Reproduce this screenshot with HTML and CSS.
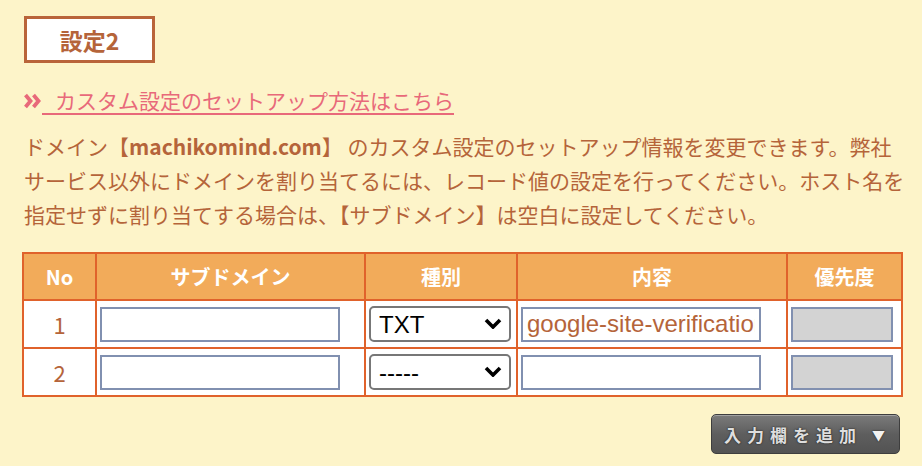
FILE: index.html
```html
<!DOCTYPE html>
<html lang="ja">
<head>
    <meta charset="UTF-8">
    <meta name="viewport" content="width=device-width, initial-scale=1.0">
    <title>設定2</title>
    <link rel="stylesheet" href="styles.css">
</head>
<body>

    <div class="container">
        <div class="setting-title">設定2</div>

        <!-- セットアップ方法へのリンク -->
        <div class="guide-link">
            <svg class="guide-arrow" width="18" height="16" viewBox="0 0 18 16">
                <path d="M1.5 2 L6.5 8 L1.5 14" fill="none" stroke="#e8697a" stroke-width="3.8"/>
                <path d="M9.5 2 L14.5 8 L9.5 14" fill="none" stroke="#e8697a" stroke-width="3.8"/>
            </svg>
            <a href="#">カスタム設定のセットアップ方法はこちら</a>
        </div>

        <p class="description">
            ドメイン【<b>machikomind.com</b>】 のカスタム設定のセットアップ情報を変更できます。弊社<br>
            サービス以外にドメインを割り当てるには、レコード値の設定を行ってください。ホスト名を<br>
            指定せずに割り当てする場合は、【サブドメイン】は空白に設定してください。
        </p>

        <!-- レコード入力欄 -->
        <table class="record-table">
            <thead>
                <tr>
                    <th class="col-no">No</th>
                    <th class="col-sub">サブドメイン</th>
                    <th class="col-type">種別</th>
                    <th class="col-value">内容</th>
                    <th class="col-priority">優先度</th>
                </tr>
            </thead>
            <tbody>
                <tr>
                    <td class="num">1</td>
                    <td><input type="text" class="text-input"></td>
                    <td>
                        <span class="select-wrap">
                            <select>
                                <option>-----</option>
                                <option selected>TXT</option>
                                <option>A</option>
                                <option>CNAME</option>
                                <option>MX</option>
                            </select>
                            <svg class="select-arrow" width="18" height="11" viewBox="0 0 18 11">
                                <path d="M2 2 L9 9 L16 2" fill="none" stroke="#000" stroke-width="3.6"/>
                            </svg>
                        </span>
                    </td>
                    <td><input type="text" class="text-input" value="google-site-verification=xxxxxxxx"></td>
                    <td><input type="text" class="priority-input" disabled></td>
                </tr>
                <tr>
                    <td class="num">2</td>
                    <td><input type="text" class="text-input"></td>
                    <td>
                        <span class="select-wrap">
                            <select>
                                <option selected>-----</option>
                                <option>TXT</option>
                                <option>A</option>
                                <option>CNAME</option>
                                <option>MX</option>
                            </select>
                            <svg class="select-arrow" width="18" height="11" viewBox="0 0 18 11">
                                <path d="M2 2 L9 9 L16 2" fill="none" stroke="#000" stroke-width="3.6"/>
                            </svg>
                        </span>
                    </td>
                    <td><input type="text" class="text-input"></td>
                    <td><input type="text" class="priority-input" disabled></td>
                </tr>
            </tbody>
        </table>

        <div class="button-row">
            <button class="add-button">入力欄を追加<span class="add-arrow">▼</span></button>
        </div>
    </div>

</body>
</html>
```

FILE: styles.css
```css
body {
    margin: 0;
    padding: 0;
    background-color: #fdf4c9;
    color: #b5643a;
    font-family: "Noto Sans CJK JP", sans-serif;
}

.container {
    padding: 16px 8px 0 24px;
}

.setting-title {
    box-sizing: border-box;
    width: 131px;
    height: 47px;
    border: 3px solid #b9643a;
    background-color: #fff;
    display: flex;
    justify-content: center;
    align-items: center;
    font-size: 23px;
    font-weight: bold;
    color: #b5643a;
}

.guide-link {
    display: flex;
    align-items: center;
    margin-top: 24px;
    height: 28px;
}

.guide-arrow {
    display: block;
}

.guide-link a {
    display: inline-block;
    padding-left: 13px;
    line-height: 26px;
    font-size: 21px;
    color: #e8697a;
    text-decoration: none;
    border-bottom: 2px solid #e8697a;
}

.description {
    margin: 14px 0 0;
    font-size: 21px;
    line-height: 34px;
    white-space: nowrap;
}

.description b {
    font-weight: bold;
}

.record-table {
    width: 881px;
    margin: 21px 0 0 -2px;
    border-collapse: collapse;
    border: 2px solid #e0622b;
    background-color: #fff;
}

.record-table th,
.record-table td {
    border: 2px solid #e0622b;
}

.record-table th {
    height: 45px;
    padding: 0;
    background-color: #f2ab5a;
    color: #fff;
    font-size: 20px;
    font-weight: bold;
}

.record-table td {
    height: 46px;
    padding: 0 3px;
    text-align: left;
}

.col-no { width: 71px; }
.col-sub { width: 267px; }
.col-type { width: 150px; }
.col-value { width: 268px; }

.record-table td.num {
    text-align: center;
    font-size: 22px;
    color: #b5643a;
}

.text-input,
.priority-input {
    box-sizing: border-box;
    display: block;
    height: 35px;
    border: 2px solid #8190b0;
    padding: 0 4px;
    font-family: "Liberation Sans", Arial, sans-serif;
    font-size: 24px;
    color: #b5643a;
    background-color: #fff;
}

.text-input {
    width: 240px;
}

.priority-input {
    width: 102px;
    background-color: #d3d3d3;
}

.select-wrap {
    position: relative;
    display: block;
    width: 142px;
}

.select-wrap select {
    -webkit-appearance: none;
    appearance: none;
    box-sizing: border-box;
    display: block;
    width: 142px;
    height: 36px;
    padding: 0 8px;
    border: 2px solid #777;
    border-radius: 5px;
    background-color: #fff;
    font-family: "Liberation Sans", Arial, sans-serif;
    font-size: 24px;
    color: #000;
}

.select-arrow {
    position: absolute;
    right: 9px;
    top: 12px;
    pointer-events: none;
}

.button-row {
    display: flex;
    justify-content: flex-end;
    margin-top: 17px;
    margin-right: 14px;
}

.add-button {
    box-sizing: border-box;
    width: 189px;
    height: 40px;
    padding: 0 0 0 12px;
    display: flex;
    align-items: center;
    border: 1px solid #3e3e3e;
    border-radius: 5px;
    background: linear-gradient(#7b7b7b, #5e5e5e 50%, #535353);
    box-shadow: inset 0 1px 0 rgba(255, 255, 255, 0.3);
    color: #dedede;
    text-shadow: 0 0 2px #2a2a2a, 0 0 1px #2a2a2a;
    font-family: "Noto Sans CJK JP", sans-serif;
    font-size: 17px;
    font-weight: bold;
    letter-spacing: 6px;
    cursor: pointer;
}

.add-arrow {
    margin-left: 10px;
    font-size: 13px;
    letter-spacing: 0;
    color: #f2f2f2;
}
```
